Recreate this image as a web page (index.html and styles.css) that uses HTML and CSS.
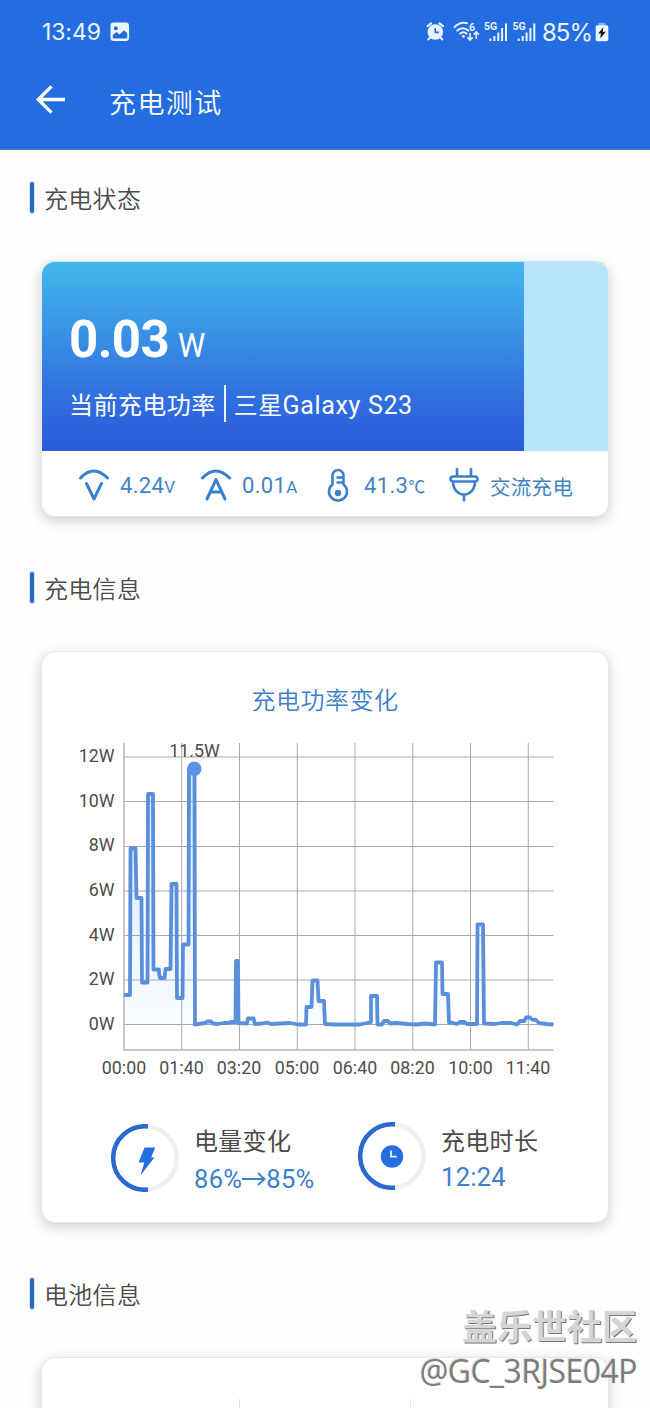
FILE: index.html
```html
<!DOCTYPE html>
<html lang="zh-CN">
<head>
<meta charset="utf-8">
<title>充电测试</title>
<link rel="stylesheet" href="styles.css">
</head>
<body>
<div class="screen">
  <header class="header">
    <div class="status">
      <span class="clock">13:49</span>
      <svg class="photo" width="20" height="20" viewBox="0 0 20 20"><rect x="0.5" y="0.5" width="18.5" height="18.5" rx="3.2" fill="#eef7ff"/><circle cx="5.8" cy="6.2" r="2" fill="#246de0"/><path d="M2.8 15.5V13l3.600-3 3 2.500 4.600-4.300 3.200 2.900v4.400q0 1.100-1.100 1.100H3.900q-1.100 0-1.100-1.100z" fill="#246de0"/></svg>
      <span class="spacer"></span>
      <svg class="tray" width="112" height="24" viewBox="424 20 112 24" fill="none" stroke="#e7f3ff">
        <circle cx="435.300" cy="32" r="7.800" fill="#e7f3ff" stroke="none"/>
        <path d="M427.500 26.200l3.600-2.800M443 26.200l-3.600-2.800M430.300 37.500l-2 2M440.300 37.500l2 2" stroke-width="2.100" stroke-linecap="round"/>
        <path d="M435.300 28v4.400h3.600" stroke="#246de0" stroke-width="1.600"/>
        <path d="M454.500 27.100q6-5.600 12.500-3.800M457.300 30.600q5.400-4.800 11 0M460.200 33.600q3.300-2.700 6.300 0" stroke-width="2" stroke-linecap="round"/>
        <circle cx="463.400" cy="36.400" r="1.400" fill="#e7f3ff" stroke="none"/>
        <path d="M470 33v7M467.400 37.400l2.600 2.600 2.600-2.600M476.300 39v-7M473.700 34.600l2.600-2.600 2.600 2.600" stroke-width="1.600"/>
        <text x="469" y="30.500" class="tiny">6</text>
        <text x="484" y="29.500" class="tiny">5G</text>
        <text x="512.400" y="29.500" class="tiny">5G</text>
        <path d="M490.400 41v-2.400M494.400 41v-5M498.300 41v-8.500M502.100 41v-13M506 41V23.500" stroke-width="2"/>
        <path d="M518.700 41v-2.400M522.700 41v-5M526.600 41v-8.500M530.400 41v-13M534.300 41V23.500" stroke-width="2"/>
      </svg>
      <span class="percent">85%</span>
      <svg class="battery" width="14" height="20" viewBox="0 0 14 20"><rect x="3.500" y="0.800" width="7" height="4" rx="1" fill="#83adf3"/><rect x="0.700" y="3.200" width="12.600" height="16" rx="1.800" fill="#eef7ff"/><path d="M8.400 5.200L3.200 11.600h2.900L5.100 16.600l5.700-6.900H7.700z" fill="#0a1522"/></svg>
    </div>
    <div class="toolbar">
      <svg width="32" height="32" viewBox="0 0 32 32" fill="none" stroke="#fff" stroke-width="3.300"><path d="M31 15.500H4.500M17.500 2.300L4.300 15.500l13.200 13.200"/></svg>
      <h1 class="page-title">充电测试</h1>
    </div>
  </header>

  <h2 class="section"><i class="mark"></i><span>充电状态</span></h2>
  <section class="card power">
    <div class="meter">
      <div class="fill">
        <div class="value"><b>0.03</b><span>W</span></div>
        <div class="caption"><span>当前充电功率</span><i></i><span>三星<em>Galaxy S23</em></span></div>
      </div>
    </div>
    <div class="stats">
      <div class="stat volt">
        <svg width="30" height="36" viewBox="0 0 30 36" class="line"><path d="M1.500 10q13-14 27 0M7.500 15.500l7.500 15.500 7.500-15.500"/></svg>
        <span>4.24<small>V</small></span>
      </div>
      <div class="stat amp">
        <svg width="30" height="36" viewBox="0 0 30 36" class="line"><path d="M1.500 10q13-14 27 0M6 31l9-19.500L24 31M10 24h10"/></svg>
        <span>0.01<small>A</small></span>
      </div>
      <div class="stat temp">
        <svg width="22" height="36" viewBox="0 0 22 36" class="line thin"><path d="M5.500 16.500V7.500a5.500 5.500 0 0 1 11 0v9a9 9 0 1 1-11 0zM10.500 9.500h6M10.500 14.500h6"/><circle cx="11" cy="25" r="3.200" fill="#3b80cd" stroke="none"/></svg>
        <span>41.3<small class="deg">℃</small></span>
      </div>
      <div class="stat plug">
        <svg width="30" height="36" viewBox="0 0 30 36" class="line thin"><path d="M8 0v8M22 0v8M4 8.500h22a2.500 2.500 0 0 1 0 5H4a2.500 2.500 0 0 1 0-5zM4 13.500c0 8 5 13 11 13s11-5 11-13M15 26.500v7" stroke-linecap="butt"/></svg>
        <span>交流充电</span>
      </div>
    </div>
  </section>

  <h2 class="section second"><i class="mark"></i><span>充电信息</span></h2>
  <section class="card info">
    <h3 class="chart-title">充电功率变化</h3>
    <svg class="chart" width="566" height="350" viewBox="42 735 566 350">
      <defs><linearGradient id="area" x1="0" y1="768" x2="0" y2="1024" gradientUnits="userSpaceOnUse"><stop offset="0" stop-color="#cfe9ff"/><stop offset="1" stop-color="#f9fcff"/></linearGradient></defs>
      <path fill="url(#area)" d="M124 1024V995H130V848.500H136V898H142V982.500H147.500V794H153.500V969.500H159V978H165V969H171V884H177V998H182.500V944.500H188.500V768H195V1024zM306 1024V1007H312V980.500H318V1001H324V1024zM371 1024V996H377V1024zM436 1024V962.500H442V994H448V1024zM477 1024V924H483V1024z"/>
      <g class="grid">
        <path d="M124 757H553.500M124 801.500H553.500M124 846.500H553.500M124 891H553.500M124 935.500H553.500M124 980H553.500M124 1024.500H553.500"/>
        <path d="M181.700 743V1050M239.500 743V1050M297.300 743V1050M355 743V1050M412.800 743V1050M470.500 743V1050M528.300 743V1050"/>
        <path class="axis" d="M124 743V1050H553.500"/>
      </g>
      <path class="series" d="M124 995H130L130.500 848.500H135.500L136.500 898H141.500L142 982.500H147.500L148 794H153L153.500 969.500H159V973L160 978H164.500L165.500 969H170.500L171.500 884H176.500L177 998H182.500L183 944.500H188.500L189 769H194.500L195 1024.500L205 1023L207 1021.500H211L213 1023.500L218 1024L224 1023H228L231 1022H235.500L236 961H238L238.500 1023L247 1023.500L248 1018.500H253.500L255 1024L262 1023.500L267 1022.500L271 1024L280 1023.500L290 1023L298 1024.500H306L306.500 1007H311.500L312.500 980.500H317.500L318.500 1001H324L325 1024L335 1024.500H360L367 1023L371 1022V996H377L377.500 1024.500H382L384 1021H388L390 1023.500L397 1023L407 1024L417 1024.500L425 1023.500L435 1024.500L436 962.500H442L442.500 994H448L449 1022.500L453 1023L457 1024L460 1022H464.500L467 1024H477L477.500 924.500H483L484 1023.500L495 1024L501 1023H511L517 1024.500L520 1021H524.500L526 1017.500H530L532 1019.500L536 1020L539 1023L546 1024L553.500 1024.500"/>
      <circle cx="194.300" cy="768.800" r="7.200" fill="#5a92e5"/>
      <g class="labels">
        <text x="194.500" y="756.500" text-anchor="middle">11.5W</text>
        <g text-anchor="end">
          <text x="114.500" y="762">12W</text><text x="114.500" y="806.500">10W</text><text x="114.500" y="851">8W</text><text x="114.500" y="895.500">6W</text><text x="114.500" y="940.500">4W</text><text x="114.500" y="985">2W</text><text x="114.500" y="1029.500">0W</text>
        </g>
        <g text-anchor="middle">
          <text x="124" y="1074">00:00</text><text x="181.500" y="1074">01:40</text><text x="239" y="1074">03:20</text><text x="297" y="1074">05:00</text><text x="355" y="1074">06:40</text><text x="412.500" y="1074">08:20</text><text x="470.500" y="1074">10:00</text><text x="528" y="1074">11:40</text>
        </g>
      </g>
    </svg>
    <div class="summary">
      <svg class="ring" width="68" height="68" viewBox="0 0 68 68" fill="none" stroke-width="4.500"><path d="M37 2.400A31.750 31.750 0 0 1 37 65.600" stroke="#f0f0f1"/><path d="M37 2.400A31.750 31.750 0 1 0 37 65.600" stroke="#2c69cf"/><path d="M33.500 23.500h10.700l-4 10h3.200L29.500 51.500l3.800-13h-5.800z" fill="#246ee0" stroke="none"/></svg>
      <div class="pair"><span class="name">电量变化</span><span class="num change">86%<svg width="24" height="16" viewBox="0 0 24 16" class="arrow"><path d="M0 8H22.500M16 2l6.500 6-6.500 6"/></svg>85%</span></div>
      <svg class="ring clockring" width="68" height="68" viewBox="0 0 68 68" fill="none" stroke-width="4.500"><path d="M37 2.400A31.750 31.750 0 0 1 37 65.600" stroke="#f0f0f1"/><path d="M37 2.400A31.750 31.750 0 1 0 37 65.600" stroke="#2c69cf"/><circle cx="34" cy="34.500" r="11.200" fill="#246ee0" stroke="none"/><path d="M33 28.500V34.700H38.700" stroke="#e3f3ff" stroke-width="1.800"/></svg>
      <div class="pair"><span class="name">充电时长</span><span class="num time">12:24</span></div>
    </div>
  </section>

  <h2 class="section third"><i class="mark"></i><span>电池信息</span></h2>
  <section class="card cells"><i></i><i></i></section>

  <div class="watermark"><b>盖乐世社区</b><span>@GC_3RJSE04P</span></div>
</div>
</body>
</html>
```
FILE: styles.css
```css
* { box-sizing: border-box; }
body { margin: 0; background: #fefefe; font-family: Roboto, "Noto Sans CJK SC", sans-serif; color: #4b4b4b; }
.screen { position: relative; width: 650px; height: 1408px; overflow: hidden; display: flex; flex-direction: column; }
i, em { font-style: normal; }
h1, h2, h3 { margin: 0; font-weight: 350; }

.header { height: 150px; flex: none; background: #246de0; color: #fff; border-bottom: 1px solid #4a83d8; }
.status { height: 64px; padding: 0 41px 0 42px; display: flex; align-items: center; color: #e9f4ff; }
.clock { width: 68px; font-family: Inter, Roboto, sans-serif; font-size: 23px; letter-spacing: -0.1px; white-space: nowrap; }
.spacer { flex: 1; }
.tray { flex: none; }
.tiny { font: 700 10.500px Roboto, sans-serif; fill: #e7f3ff; stroke: none; }
.percent { width: 52px; margin-left: 6px; font-family: Inter, Roboto, sans-serif; font-size: 24px; letter-spacing: -1px; white-space: nowrap; }
.battery { margin-left: 1px; }
.toolbar { height: 72px; padding-left: 34px; display: flex; align-items: center; gap: 43px; }
.page-title { font-size: 27px; line-height: 40px; letter-spacing: 1.400px; padding-top: 7px; }

.section { flex: none; height: 34px; margin: 30px 0 0 29px; display: flex; align-items: center; gap: 9px; font-size: 24px; line-height: 34px; letter-spacing: .3px; }
.section span { padding-top: 6px; }
.mark { width: 6px; height: 33px; border: 1.500px solid #cbe1fb; border-radius: 3px; background: #2d67c4; }
.card { flex: none; width: 568px; margin: 0 0 0 41px; background: #fff; border: 1px solid #e8e8e8; border-radius: 14px; box-shadow: 0 4px 13px rgba(0,0,0,.19); }

.power { height: 256px; margin-top: 47px; overflow: hidden; border-top-color: #c5e5f2; }
.meter { height: 189px; background: #b7e6fc; }
.fill { width: 482px; height: 189px; padding: 45px 0 0 27px; background: linear-gradient(#44b7ec 0%, #388fe5 40%, #3273df 67%, #2a5adb 100%); color: #fff; }
.value { height: 66px; display: flex; align-items: baseline; gap: 9px; line-height: 66px; }
.value b { font-size: 51px; letter-spacing: -.6px; }
.value span { font-size: 33px; font-weight: 400; transform: scaleX(.93); transform-origin: left; }
.caption { margin-top: 10px; height: 40px; display: flex; align-items: center; font-size: 24px; letter-spacing: .45px; white-space: nowrap; }
.caption i { width: 2px; height: 37px; margin: 0 8px; background: #eef7ff; }
.caption em { font-size: 25px; letter-spacing: .65px; }
.stats { height: 65px; padding: 4px 0 0 37px; display: flex; align-items: center; color: #4283c2; font-size: 22px; white-space: nowrap; }
.stat { flex: none; display: flex; align-items: center; gap: 11px; }
.stat span { letter-spacing: .35px; }
.stat small { font-size: 17px; }
.stat .deg { font-size: 17px; letter-spacing: -1px; }
.volt, .amp { width: 122px; }
.temp { width: 126px; padding-left: 4px; gap: 15px; }
.plug { font-size: 20.500px; }
.stat.plug span { letter-spacing: .3px; }
.line { fill: none; stroke: #3b80cd; stroke-width: 3; stroke-linecap: round; stroke-linejoin: round; flex: none; }
.line.thin { stroke-width: 2.600; }

.section.second { margin-top: 53px; }
.info { height: 572px; margin-top: 47px; display: flex; flex-direction: column; }
.chart-title { margin-top: 31px; height: 36px; line-height: 36px; text-align: center; font-size: 24px; letter-spacing: .5px; color: #3b80c8; }
.chart { margin-top: 16px; flex: none; }
.grid { fill: none; stroke: #a9a9a9; stroke-width: 1; }
.axis { stroke: #b5b5b5; stroke-width: 1.500; }
.series { fill: none; stroke: #5a8fdc; stroke-width: 3.800; stroke-linejoin: round; }
.labels { font: 17.800px Roboto, sans-serif; fill: #4d4d4d; }
.summary { height: 80px; margin-top: 33px; padding-left: 69px; display: flex; align-items: flex-start; }
.ring { flex: none; margin-top: 6px; }
.pair { width: 164px; margin-left: 15px; padding-top: 5px; display: flex; flex-direction: column; white-space: nowrap; }
.name { font-size: 24px; line-height: 38px; letter-spacing: .3px; }
.num { font-size: 25.500px; line-height: 36px; color: #3b80c8; display: flex; align-items: center; }
.change { letter-spacing: .3px; }
.time { letter-spacing: .3px; margin-top: -2px; }
.clockring { margin-top: 4px; }
.arrow { fill: none; stroke: #3b80c8; stroke-width: 1.900; flex: none; }

.section.third { margin-top: 53px; }
.cells { height: 120px; margin-top: 47px; padding: 41px 0 0 197px; display: flex; gap: 170px; }
.cells i { width: 1px; height: 60px; background: #e5e5e5; }

.watermark { position: absolute; right: 13px; top: 1300px; display: flex; flex-direction: column; align-items: flex-end; white-space: nowrap; }
.watermark b { font: 700 35px/50px "Noto Sans CJK SC", sans-serif; color: #d5d5d5; text-shadow: 1px 1px 0 #777; }
.watermark span { font: 400 32px/42px "Open Sans", "Noto Sans", sans-serif; letter-spacing: -.55px; color: #7c7c7c; text-shadow: -1px -1px 0 #ddd; }
```
